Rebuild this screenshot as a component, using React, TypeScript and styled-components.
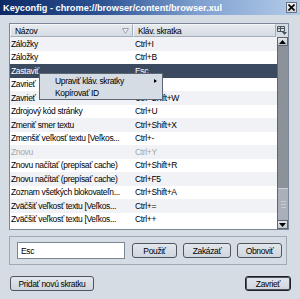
import React from 'react';
import styled, { createGlobalStyle } from 'styled-components';

const FONT = `"Liberation Sans", Arial, sans-serif`;

const Global = createGlobalStyle`
  html, body { margin: 0; padding: 0; background: #d5dce4; }
  body { width: 300px; height: 299px; overflow: hidden; }
  * { box-sizing: border-box; }
`;

const Window = styled.div`
  width: 300px;
  height: 299px;
  background: #d5dce4;
  display: flex;
  flex-direction: column;
  font-family: ${FONT};
  font-size: 8.5px;
  letter-spacing: -0.35px;
  color: #000;
`;

const TitleBar = styled.div`
  height: 15px;
  flex: none;
  display: flex;
  align-items: center;
  padding: 0 3px;
  background: linear-gradient(to right, #0c2a66 0%, #2f5595 35%, #7d9fcf 65%, #b4cbe8 100%);
  color: #fff;
  font-weight: bold;
  font-size: 9.2px;
  letter-spacing: 0;
  white-space: nowrap;
`;

const CloseBox = styled.div`
  margin-left: auto;
  width: 11px;
  height: 11px;
  border: 1px solid #6a7480;
  background: linear-gradient(#eef1f4, #cfd5dc);
  display: flex;
  align-items: center;
  justify-content: center;
`;

const Body = styled.div`
  flex: 1;
  display: flex;
  flex-direction: column;
  padding: 8px 9px 0 9px;
`;

const Tree = styled.div`
  height: 207px;
  margin-right: 2px;
  border: 1px solid #7b8696;
  background: #fff;
  display: flex;
  flex-direction: column;
`;

const Header = styled.div`
  height: 13px;
  display: flex;
  background: #fff;
`;

const HeadCell = styled.div<{ $w?: number }>`
  ${(p) => (p.$w ? `width: ${p.$w}px; flex: none;` : 'flex: 1;')}
  height: 13px;
  border: 1px solid #a5aeb9;
  border-left-color: #f4f6f8;
  border-top-color: #f4f6f8;
  background: linear-gradient(#e6eaef, #d6dce4);
  display: flex;
  align-items: center;
  padding-left: 4px;
  padding-right: 3px;
  color: #000;
`;

const Picker = styled.div`
  width: 12px;
  flex: none;
  height: 13px;
  display: flex;
  align-items: center;
  justify-content: center;
  background: #d5dce4;
`;

const SortMark = styled.span`
  margin-left: auto;
  display: flex;
`;

const Content = styled.div`
  flex: 1;
  display: flex;
  min-height: 0;
`;

const List = styled.div`
  flex: 1;
  position: relative;
  overflow: hidden;
`;

const Row = styled.div<{ $alt: boolean; $sel: boolean; $dis: boolean }>`
  height: 13.5px;
  display: grid;
  grid-template-columns: 123px 1fr;
  align-items: center;
  white-space: nowrap;
  background: ${(p) => (p.$sel ? '#3c4a60' : p.$alt ? '#f1f2f5' : '#fff')};
  color: ${(p) => (p.$sel ? '#fff' : p.$dis ? '#a3a7ad' : '#000')};
`;

const Cell = styled.div<{ $pad: number }>`
  padding-left: ${(p) => p.$pad}px;
  overflow: hidden;
`;

const Scrollbar = styled.div`
  width: 11px;
  flex: none;
  display: flex;
  flex-direction: column;
  border-left: 1px solid #5e6670;
  background: #8c929a;
`;

const ScrollBtn = styled.div`
  height: 9px;
  flex: none;
  background: linear-gradient(#e4e8ed, #c3cad3);
  border: 1px solid #5e6670;
  border-left: none;
  display: flex;
  align-items: center;
  justify-content: center;
`;

const Track = styled.div`
  flex: 1;
  display: flex;
  flex-direction: column;
  justify-content: flex-end;
`;

const Thumb = styled.div`
  height: 32px;
  background: #a9b0b9;
  border-top: 1px solid #c9ced5;
  display: flex;
  flex-direction: column;
  align-items: center;
  justify-content: center;
  gap: 2px;
`;

const Grip = styled.div`
  width: 5px;
  height: 1px;
  background: #c8cdd4;
`;

const Menu = styled.div`
  position: absolute;
  left: 29px;
  top: 36px;
  width: 124px;
  height: 27px;
  border: 1px solid #5c6674;
  background: #d5dce4;
  padding-top: 1px;
  display: flex;
  flex-direction: column;
  z-index: 2;
`;

const MenuItem = styled.div`
  height: 12px;
  display: flex;
  align-items: center;
  padding-left: 15px;
  padding-right: 5px;
  white-space: nowrap;
`;

const SubArrow = styled.span`
  margin-left: auto;
  width: 0;
  height: 0;
  border-top: 2.5px solid transparent;
  border-bottom: 2.5px solid transparent;
  border-left: 3px solid #000;
`;

const Group = styled.div`
  margin-top: 6px;
  margin-right: 4px;
  height: 29px;
  border: 1px solid #a0aab5;
  display: flex;
  align-items: center;
  padding: 0 2px 0 7px;
  gap: 7px;
`;

const KeyInput = styled.div`
  width: 108px;
  height: 17px;
  flex: none;
  border: 1px solid #7b8696;
  background: #fff;
  display: flex;
  align-items: center;
  padding-left: 3px;
`;

const Buttons = styled.div`
  display: flex;
  gap: 6px;
`;

const Button = styled.div<{ $w: number; $def?: boolean }>`
  width: ${(p) => p.$w}px;
  height: 15px;
  flex: none;
  border: 1px solid ${(p) => (p.$def ? '#1e2227' : '#4e555e')};
  ${(p) => (p.$def ? 'box-shadow: inset 0 0 0 1px #4e555e;' : '')}
  border-radius: 3px;
  background: linear-gradient(#e2e7ec, #cfd6de);
  display: flex;
  align-items: center;
  justify-content: center;
  white-space: nowrap;
`;

const Footer = styled.div`
  margin-top: 11px;
  display: flex;
  justify-content: space-between;
  padding-left: 1px;
`;

type R = [string, string, ('sel' | 'dis')?];
const rows: R[] = [
  ['Záložky', 'Ctrl+I'],
  ['Záložky', 'Ctrl+B'],
  ['Zastaviť', 'Esc', 'sel'],
  ['Zavrieť', 'Ctrl+F4'],
  ['Zavrieť', 'Ctrl+Shift+W'],
  ['Zdrojový kód stránky', 'Ctrl+U'],
  ['Zmeniť smer textu', 'Ctrl+Shift+X'],
  ['Zmenšiť veľkosť textu [Veľkos...', 'Ctrl+-'],
  ['Znovu', 'Ctrl+Y', 'dis'],
  ['Znovu načítať (prepísať cache)', 'Ctrl+Shift+R'],
  ['Znovu načítať (prepísať cache)', 'Ctrl+F5'],
  ['Zoznam všetkých blokovateľn...', 'Ctrl+Shift+A'],
  ['Zväčšiť veľkosť textu [Veľkos...', 'Ctrl+='],
  ['Zväčšiť veľkosť textu [Veľkos...', 'Ctrl++'],
];

export default function App() {
  return (
    <>
      <Global />
      <Window>
        <TitleBar>
          Keyconfig - chrome://browser/content/browser.xul
          <CloseBox>
            <svg width="7" height="7" viewBox="0 0 7 7">
              <path d="M0.5 0.5 L6.5 6.5 M6.5 0.5 L0.5 6.5" stroke="#000" strokeWidth="1.6" />
            </svg>
          </CloseBox>
        </TitleBar>
        <Body>
          <Tree>
            <Header>
              <HeadCell $w={123}>
                Názov
                <SortMark>
                  <svg width="7" height="6" viewBox="0 0 7 6">
                    <path d="M0.5 0.5 H6.5 L3.5 5.5 Z" fill="#eef1f4" stroke="#98a2ad" strokeWidth="1" />
                  </svg>
                </SortMark>
              </HeadCell>
              <HeadCell>Kláv. skratka</HeadCell>
              <Picker>
                <svg width="10" height="9" viewBox="0 0 10 9">
                  <path d="M0.5 0.5 H7.5 V5.5 H0.5 Z M0.5 2.5 H7.5 M3.5 0.5 V5.5" fill="none" stroke="#4a525c" strokeWidth="1" />
                  <path d="M5 6 H10 L7.5 9 Z" fill="#4a525c" />
                </svg>
              </Picker>
            </Header>
            <Content>
              <List>
                {rows.map(([name, key, flag], i) => (
                  <Row key={i} $alt={i % 2 === 0 && flag !== 'sel'} $sel={flag === 'sel'} $dis={flag === 'dis'}>
                    <Cell $pad={1}>{name}</Cell>
                    <Cell $pad={2}>{key}</Cell>
                  </Row>
                ))}
                <Menu>
                  <MenuItem>
                    Upraviť kláv. skratky
                    <SubArrow />
                  </MenuItem>
                  <MenuItem>Kopírovať ID</MenuItem>
                </Menu>
              </List>
              <Scrollbar>
                <ScrollBtn>
                  <svg width="7" height="4" viewBox="0 0 7 4">
                    <path d="M0 4 H7 L3.5 0 Z" fill="#000" />
                  </svg>
                </ScrollBtn>
                <Track>
                  <Thumb>
                    <Grip />
                    <Grip />
                    <Grip />
                  </Thumb>
                </Track>
                <ScrollBtn>
                  <svg width="7" height="4" viewBox="0 0 7 4">
                    <path d="M0 0 H7 L3.5 4 Z" fill="#000" />
                  </svg>
                </ScrollBtn>
              </Scrollbar>
            </Content>
          </Tree>
          <Group>
            <KeyInput>Esc</KeyInput>
            <Buttons>
              <Button $w={45}>Použiť</Button>
              <Button $w={48}>Zakázať</Button>
              <Button $w={45}>Obnoviť</Button>
            </Buttons>
          </Group>
          <Footer>
            <Button $w={84}>Pridať novú skratku</Button>
            <Button $w={46} $def>
              Zavrieť
            </Button>
          </Footer>
        </Body>
      </Window>
    </>
  );
}
